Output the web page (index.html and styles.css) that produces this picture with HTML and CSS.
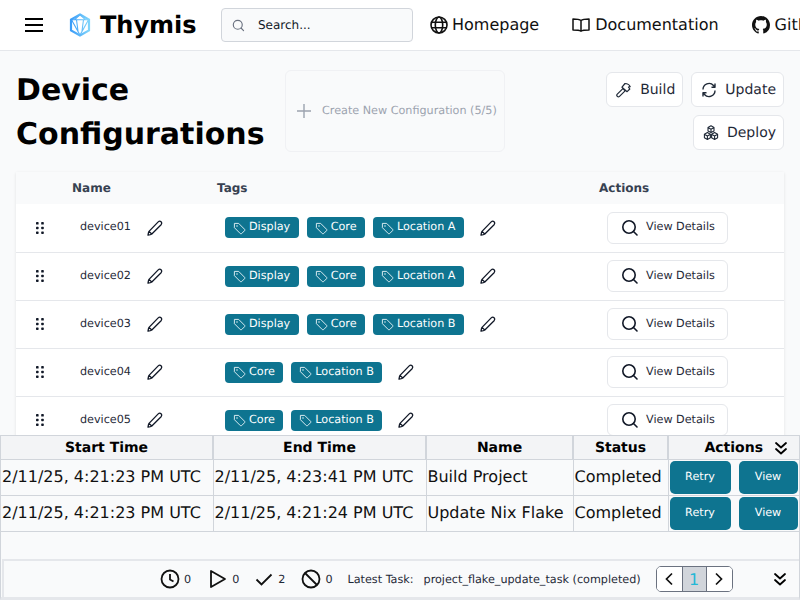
FILE: index.html
```html
<!DOCTYPE html>
<html lang="en">
<head>
<meta charset="utf-8">
<title>Device Configurations - Thymis</title>
<link rel="stylesheet" href="styles.css">
</head>
<body>
<svg class="defs" width="0" height="0" aria-hidden="true">
  <symbol id="i-pen" viewBox="0 0 18 18"><path d="M2 16.200c.2-1.400.4-2.800 1-3.800L12.200 2.900c.9-.9 2.100-.9 2.900-.1.8.8.8 2 0 2.900L5.800 15c-1 .7-2.400 1-3.800 1.200zM3 12.400l2.800 2.600" fill="none" stroke="currentColor" stroke-width="1.300" stroke-linecap="round" stroke-linejoin="round"/></symbol>
  <symbol id="i-tag" viewBox="0 0 14 14"><path d="M1.500 1.500h4.600l6.400 6.400c.4.400.4 1 0 1.400l-3.200 3.200c-.4.400-1 .4-1.400 0L1.500 6.100z" fill="none" stroke="currentColor" stroke-width="1" stroke-linejoin="round"/><circle cx="4.300" cy="4.300" r=".8" fill="currentColor"/></symbol>
  <symbol id="i-search" viewBox="0 0 18 18"><circle cx="8" cy="8" r="6.200" fill="none" stroke="currentColor" stroke-width="1.600"/><path d="M12.500 12.500l3.500 3.500" fill="none" stroke="currentColor" stroke-width="1.600" stroke-linecap="round"/></symbol>
  <symbol id="i-drag" viewBox="0 0 8 12"><g fill="currentColor"><rect x="0" y="0" width="2.600" height="2.600" rx=".7"/><rect x="5.200" y="0" width="2.600" height="2.600" rx=".7"/><rect x="0" y="4.700" width="2.600" height="2.600" rx=".7"/><rect x="5.200" y="4.700" width="2.600" height="2.600" rx=".7"/><rect x="0" y="9.400" width="2.600" height="2.600" rx=".7"/><rect x="5.200" y="9.400" width="2.600" height="2.600" rx=".7"/></g></symbol>
  <symbol id="i-dbl" viewBox="0 0 14 14"><path d="M2 2l5 4.500L12 2M2 8l5 4.500L12 8" fill="none" stroke="currentColor" stroke-width="1.800" stroke-linecap="round" stroke-linejoin="round"/></symbol>
</svg>
<div class="app">
  <nav class="nav">
    <svg class="burger" viewBox="0 0 18 14" aria-hidden="true"><path d="M0 1h18M0 7h18M0 13h18" stroke="currentColor" stroke-width="2"/></svg>
    <svg class="logo" viewBox="0 0 22 24" aria-hidden="true">
      <defs><linearGradient id="lg" x1="0" y1="0" x2="1" y2="0"><stop offset="0" stop-color="#3b9cf8"/><stop offset="1" stop-color="#7fd4fb"/></linearGradient></defs>
      <path d="M11 1.500L20 6.600V17.400L11 22.500L2 17.400V6.600z" fill="none" stroke="url(#lg)" stroke-width="2.200"/>
      <path d="M2.500 6.800H19.500L11 22L2.500 6.800M7.500 6.800L9 18M14.500 6.800L13 18M11 1.500L5.500 6.800M11 1.500L16.500 6.800" fill="none" stroke="url(#lg)" stroke-width="1.100"/>
    </svg>
    <span class="brand">Thymis</span>
    <label class="search">
      <svg class="search-icon"><use href="#i-search"/></svg>
      <span>Search...</span>
    </label>
    <a class="link link-home">
      <svg class="link-icon" viewBox="0 0 18 18" aria-hidden="true"><g fill="none" stroke="currentColor" stroke-width="1.600"><circle cx="9" cy="9" r="8"/><ellipse cx="9" cy="9" rx="3.700" ry="8"/><path d="M1.500 6.300h15M1.500 11.700h15"/></g></svg>
      <span class="link-text">Homepage</span>
    </a>
    <a class="link link-docs">
      <svg class="link-icon" viewBox="0 0 18 18" aria-hidden="true"><path d="M9 4.500C7.500 3.300 5.500 3 1 3v11c4 0 6.500.2 8 1.200 1.500-1 4-1.200 8-1.200V3c-4.500 0-6.500.3-8 1.500zM9 4.500v10.700" fill="none" stroke="currentColor" stroke-width="1.500" stroke-linejoin="round"/></svg>
      <span class="link-text">Documentation</span>
    </a>
    <a class="link link-git">
      <svg class="link-icon" viewBox="0 0 16 16" aria-hidden="true"><path fill="currentColor" d="M8 0C3.580 0 0 3.580 0 8c0 3.540 2.290 6.530 5.470 7.590.4.070.55-.17.55-.38 0-.19-.01-.82-.01-1.490-2.010.37-2.530-.49-2.690-.94-.09-.23-.48-.94-.82-1.130-.28-.15-.68-.52-.01-.53.63-.01 1.080.58 1.230.82.720 1.210 1.870.87 2.330.66.070-.52.280-.87.510-1.070-1.780-.2-3.640-.89-3.640-3.950 0-.87.310-1.590.82-2.150-.08-.2-.36-1.020.08-2.120 0 0 .67-.21 2.200.82.640-.18 1.320-.27 2-.27s1.360.09 2 .27c1.530-1.040 2.200-.82 2.200-.82.440 1.100.16 1.920.08 2.120.51.560.82 1.270.82 2.150 0 3.070-1.870 3.750-3.650 3.950.29.250.54.730.54 1.480 0 1.070-.01 1.930-.01 2.200 0 .21.150.46.550.38A8.010 8.010 0 0 0 16 8c0-4.420-3.580-8-8-8z"/></svg>
      <span class="link-text">GitHub</span>
    </a>
  </nav>

  <main class="main">
    <header class="head">
      <h1 class="title">Device Configurations</h1>
      <div class="create">
        <svg class="plus" viewBox="0 0 14 14" aria-hidden="true"><path d="M7 0v14M0 7h14" stroke="currentColor" stroke-width="1.400"/></svg>
        <span class="create-text">Create New Configuration (5/5)</span>
      </div>
      <div class="actions">
        <button class="btn">
          <svg class="btn-icon" viewBox="0 0 16 16" aria-hidden="true"><path d="M1.300 12.200L6.900 6.600 9.100 8.800 3.500 14.400a1.550 1.550 0 0 1-2.200-2.200zM6 5.200L9 1.500c2.300 0 4.300 1.100 5.200 3.200l-1.700.4 1.300 1.900-2.700 2.700z" fill="none" stroke="currentColor" stroke-width="1.200" stroke-linejoin="round"/></svg>
          <span class="btn-text">Build</span>
        </button>
        <button class="btn">
          <svg class="btn-icon" viewBox="0 0 16 16" aria-hidden="true"><path d="M2 7.500A6 6 0 0 1 12.500 3.500L14 5M14 8.500A6 6 0 0 1 3.500 12.500L2 11M14 1.500V5.200H10.500M2 14.500V10.800H5.500" fill="none" stroke="currentColor" stroke-width="1.400" stroke-linejoin="round"/></svg>
          <span class="btn-text">Update</span>
        </button>
        <button class="btn">
          <svg class="btn-icon" viewBox="0 0 16 16" aria-hidden="true"><g fill="none" stroke="currentColor" stroke-width="1.100" stroke-linejoin="round"><path d="M8 .8l3 1.700v3.400L8 7.600 5 5.900V2.500zM5 2.500l3 1.700 3-1.700M8 4.200v3.400"/><path d="M4.400 7.600l3 1.700v3.400l-3 1.700-3-1.700V9.300zM1.400 9.300l3 1.700 3-1.700M4.400 11v3.400"/><path d="M11.600 7.600l3 1.700v3.400l-3 1.700-3-1.700V9.300zM8.600 9.300l3 1.700 3-1.700M11.600 11v3.400"/></g></svg>
          <span class="btn-text">Deploy</span>
        </button>
      </div>
    </header>

    <table class="devices">
      <colgroup><col class="c-drag"><col class="c-name"><col class="c-tags"><col class="c-act"></colgroup>
      <thead><tr><th></th><th>Name</th><th>Tags</th><th>Actions</th></tr></thead>
      <tbody>
        <tr>
          <td><svg class="drag"><use href="#i-drag"/></svg></td>
          <td><div class="cell"><span class="dev">device01</span><svg class="pen"><use href="#i-pen"/></svg></div></td>
          <td><div class="cell tags"><span class="tag"><svg class="tag-i"><use href="#i-tag"/></svg>Display</span><span class="tag"><svg class="tag-i"><use href="#i-tag"/></svg>Core</span><span class="tag"><svg class="tag-i"><use href="#i-tag"/></svg>Location A</span><svg class="pen pen-t"><use href="#i-pen"/></svg></div></td>
          <td><button class="view"><svg class="view-i"><use href="#i-search"/></svg><span>View Details</span></button></td>
        </tr>
        <tr>
          <td><svg class="drag"><use href="#i-drag"/></svg></td>
          <td><div class="cell"><span class="dev">device02</span><svg class="pen"><use href="#i-pen"/></svg></div></td>
          <td><div class="cell tags"><span class="tag"><svg class="tag-i"><use href="#i-tag"/></svg>Display</span><span class="tag"><svg class="tag-i"><use href="#i-tag"/></svg>Core</span><span class="tag"><svg class="tag-i"><use href="#i-tag"/></svg>Location A</span><svg class="pen pen-t"><use href="#i-pen"/></svg></div></td>
          <td><button class="view"><svg class="view-i"><use href="#i-search"/></svg><span>View Details</span></button></td>
        </tr>
        <tr>
          <td><svg class="drag"><use href="#i-drag"/></svg></td>
          <td><div class="cell"><span class="dev">device03</span><svg class="pen"><use href="#i-pen"/></svg></div></td>
          <td><div class="cell tags"><span class="tag"><svg class="tag-i"><use href="#i-tag"/></svg>Display</span><span class="tag"><svg class="tag-i"><use href="#i-tag"/></svg>Core</span><span class="tag"><svg class="tag-i"><use href="#i-tag"/></svg>Location B</span><svg class="pen pen-t"><use href="#i-pen"/></svg></div></td>
          <td><button class="view"><svg class="view-i"><use href="#i-search"/></svg><span>View Details</span></button></td>
        </tr>
        <tr>
          <td><svg class="drag"><use href="#i-drag"/></svg></td>
          <td><div class="cell"><span class="dev">device04</span><svg class="pen"><use href="#i-pen"/></svg></div></td>
          <td><div class="cell tags"><span class="tag"><svg class="tag-i"><use href="#i-tag"/></svg>Core</span><span class="tag"><svg class="tag-i"><use href="#i-tag"/></svg>Location B</span><svg class="pen pen-t"><use href="#i-pen"/></svg></div></td>
          <td><button class="view"><svg class="view-i"><use href="#i-search"/></svg><span>View Details</span></button></td>
        </tr>
        <tr>
          <td><svg class="drag"><use href="#i-drag"/></svg></td>
          <td><div class="cell"><span class="dev">device05</span><svg class="pen"><use href="#i-pen"/></svg></div></td>
          <td><div class="cell tags"><span class="tag"><svg class="tag-i"><use href="#i-tag"/></svg>Core</span><span class="tag"><svg class="tag-i"><use href="#i-tag"/></svg>Location B</span><svg class="pen pen-t"><use href="#i-pen"/></svg></div></td>
          <td><button class="view"><svg class="view-i"><use href="#i-search"/></svg><span>View Details</span></button></td>
        </tr>
      </tbody>
    </table>
  </main>

  <section class="panel">
    <div class="tasks">
      <table class="task-table">
        <colgroup><col class="t1"><col class="t2"><col class="t3"><col class="t4"><col class="t5"></colgroup>
        <thead>
          <tr><th>Start Time</th><th>End Time</th><th>Name</th><th>Status</th><th><div class="act-head"><span>Actions</span><svg class="dbl"><use href="#i-dbl"/></svg></div></th></tr>
        </thead>
        <tbody>
          <tr><td>2/11/25, 4:21:23 PM UTC</td><td>2/11/25, 4:23:41 PM UTC</td><td>Build Project</td><td>Completed</td><td><div class="task-btns"><button class="teal">Retry</button><button class="teal">View</button></div></td></tr>
          <tr><td>2/11/25, 4:21:23 PM UTC</td><td>2/11/25, 4:21:24 PM UTC</td><td>Update Nix Flake</td><td>Completed</td><td><div class="task-btns"><button class="teal">Retry</button><button class="teal">View</button></div></td></tr>
        </tbody>
      </table>
    </div>
    <footer class="status">
      <div class="stats">
        <svg class="st-i" viewBox="0 0 20 20" aria-hidden="true"><circle cx="10" cy="10" r="8.500" fill="none" stroke="currentColor" stroke-width="1.800"/><path d="M10 5v5.500l3.500 2" fill="none" stroke="currentColor" stroke-width="1.800"/></svg><span class="num">0</span>
        <svg class="st-i st-play" viewBox="0 0 20 20" aria-hidden="true"><path d="M3 2v16L17 10z" fill="none" stroke="currentColor" stroke-width="1.800" stroke-linejoin="round"/></svg><span class="num">0</span>
        <svg class="st-i st-check" viewBox="0 0 20 20" aria-hidden="true"><path d="M2.500 10.500L7.500 15.500L17.500 5.500" fill="none" stroke="currentColor" stroke-width="1.800"/></svg><span class="num">2</span>
        <svg class="st-i st-ban" viewBox="0 0 20 20" aria-hidden="true"><circle cx="10" cy="10" r="8.500" fill="none" stroke="currentColor" stroke-width="1.800"/><path d="M4 4l12 12" stroke="currentColor" stroke-width="1.800"/></svg><span class="num">0</span>
      </div>
      <span class="latest">Latest Task:</span>
      <span class="latest-val">project_flake_update_task (completed)</span>
      <div class="pager">
        <button class="pg"><svg class="pg-i" viewBox="0 0 10 14" aria-hidden="true"><path d="M8 1.500L2.500 7L8 12.500" fill="none" stroke="currentColor" stroke-width="1.700"/></svg></button>
        <span class="pg pg-cur">1</span>
        <button class="pg"><svg class="pg-i" viewBox="0 0 10 14" aria-hidden="true"><path d="M2 1.500L7.500 7L2 12.500" fill="none" stroke="currentColor" stroke-width="1.700"/></svg></button>
      </div>
      <svg class="dbl dbl-foot"><use href="#i-dbl"/></svg>
    </footer>
  </section>
</div>
</body>
</html>
```
FILE: styles.css
```css
* { box-sizing: border-box; }
html, body { margin: 0; padding: 0; }
body { font-family: "DejaVu Sans", sans-serif; color: #111827; background: #f9fafb; text-rendering: geometricPrecision; }
.defs { position: absolute; }
button { font-family: inherit; cursor: pointer; text-rendering: inherit; }
.app { width: 800px; height: 600px; display: flex; flex-direction: column; overflow: hidden; }

/* nav */
.nav { flex: none; height: 51px; display: flex; align-items: center; background: #fff; border-bottom: 1px solid #e5e7eb; padding-left: 25px; overflow: hidden; white-space: nowrap; color: #000; }
.burger { flex: none; width: 18px; height: 14px; margin-right: 26px; }
.logo { flex: none; width: 22px; height: 24px; }
.brand { flex: none; font-size: 24px; font-weight: 700; margin-left: 9px; width: 121px; }
.search { flex: none; width: 192px; height: 34px; display: flex; align-items: center; background: #f9fafb; border: 1px solid #d1d5db; border-radius: 4px; padding-left: 10px; font-size: 12px; color: #111827; }
.search-icon { width: 13px; height: 13px; color: #6b7280; margin-right: 13px; }
.link { flex: none; display: flex; align-items: center; font-size: 16px; color: #111; }
.link-text { padding-bottom: 1px; }
.link-icon { flex: none; width: 18px; height: 18px; }
.link-home { margin-left: 17px; gap: 4px; }
.link-docs { margin-left: 33px; gap: 5px; }
.link-git { margin-left: 33px; gap: 5px; }

/* main */
.main { flex: 1; min-height: 0; overflow: hidden; padding: 16px; }
.head { display: flex; align-items: flex-start; height: 105px; }
.title { flex: none; width: 269px; margin: 2px 0 0; font-size: 30px; line-height: 44px; font-weight: 700; color: #000; }
.create { flex: none; width: 220px; height: 82px; margin-top: 3px; display: flex; align-items: center; gap: 11px; padding-left: 11px; background: #f9fafb; border: 1px solid #f0f1f4; border-radius: 6px; font-size: 11.200px; color: #9ca3af; white-space: nowrap; }
.create-text { padding-bottom: 2px; }
.plus { width: 14px; height: 14px; color: #9ca3af; flex: none; }
.actions { flex: 1; margin-left: 16px; display: flex; flex-wrap: wrap; justify-content: flex-end; gap: 8px; padding-top: 5px; }
.btn { height: 35px; display: flex; align-items: center; gap: 8px; padding: 0 7px 0 9px; background: #fff; border: 1px solid #e5e7eb; border-radius: 6px; font-size: 14px; color: #1f2937; }
.btn-icon { width: 16px; height: 16px; flex: none; }

/* devices table */
.devices { width: 768px; table-layout: fixed; border-collapse: collapse; margin-top: 0; box-shadow: 0 1px 3px rgba(0,0,0,.1); }
.c-drag { width: 48px; }
.c-name { width: 145px; }
.c-tags { width: 382px; }
.c-act { width: 193px; }
.devices thead tr { height: 32px; background: #f9fafb; }
.devices th { text-align: left; font-size: 12px; font-weight: 700; color: #374151; padding: 0 0 0 8px; }
.devices tbody tr { height: 48px; background: #fff; border-bottom: 1px solid #e5e7eb; }
.devices td { padding: 0 0 0 16px; vertical-align: middle; }
.drag { display: block; width: 8px; height: 12px; color: #111827; margin-left: 4px; }
.cell { display: flex; align-items: center; }
.dev { width: 67px; font-size: 11.200px; color: #1f2937; padding-bottom: 2px; }
.pen { width: 18px; height: 18px; color: #111827; flex: none; margin-left: -1px; }
.tags { gap: 8px; }
.tag { height: 21px; display: flex; align-items: center; padding: 0 8.400px 2px 8px; gap: 3px; background: #0e7490; border-radius: 4px; font-size: 11.200px; color: #fff; line-height: 17px; }
.tag-i { width: 13px; height: 13px; color: #e5f2f6; margin-top: 3px; }
.pen-t { margin-left: 7px; }
.view { width: 121px; height: 32px; display: flex; align-items: center; gap: 7px; padding: 0 0 0 13px; background: #fff; border: 1px solid #e5e7eb; border-radius: 6px; font-size: 11.200px; color: #1f2937; }
.view span { padding-bottom: 2px; }
.view-i { width: 18px; height: 18px; color: #111827; flex: none; }

/* tasks panel */
.panel { flex: none; height: 165px; display: flex; flex-direction: column; background: #f9fafb; border-top: 1px solid #d1d5db; border-left: 1px solid #d1d5db; border-right: 1px solid #d1d5db; border-bottom: 3px solid #e5e7eb; position: relative; }
.tasks { flex: 1; min-height: 0; }
.task-table { width: 798px; table-layout: fixed; border-collapse: collapse; font-size: 16px; color: #111; white-space: nowrap; }
.t1 { width: 212px; } .t2 { width: 213px; } .t3 { width: 147px; } .t4 { width: 95px; } .t5 { width: 131px; }
.task-table thead tr { height: 23px; background: #f3f4f6; }
.task-table th { font-size: 14px; font-weight: 700; color: #000; text-align: center; padding: 2px 0 0; border-right: 2px solid #d1d5db; border-bottom: 1px solid #d1d5db; }
.task-table th:last-child { border-right: 0; }
.task-table tbody tr { height: 36px; }
.task-table td { padding: 0 0 1px 1px; border-right: 1px solid #d1d5db; border-bottom: 1px solid #d1d5db; overflow: hidden; }
.task-table td:last-child { border-right: 0; padding: 0 0 0 1px; }
.act-head { display: flex; align-items: center; justify-content: flex-end; gap: 11px; padding-right: 11px; }
.dbl { width: 14px; height: 14px; color: #000; flex: none; }
.task-btns { display: flex; gap: 8px; }
.teal { width: 61px; height: 33px; padding: 0 0 2px; background: #0e7490; border: 0; border-radius: 5px; color: #fff; font-size: 11.200px; }
.teal + .teal { width: 59px; }

/* status bar */
.status { flex: none; height: 38px; display: flex; align-items: center; margin-left: 1px; background: #f9fafb; border: 2px solid #e5e7eb; border-bottom: 0; border-right: 0; padding-left: 156px; font-size: 11.200px; color: #1f2937; white-space: nowrap; }
.stats { display: flex; align-items: center; }
.st-i { width: 20px; height: 20px; color: #111; flex: none; }
.num { margin-left: 4px; color: #1f2937; }
.st-play { margin-left: 17px; }
.st-check { margin-left: 15px; }
.st-ban { margin-left: 16px; }
.latest { margin-left: 15px; }
.latest-val { margin-left: 10px; }
.pager { display: flex; margin-left: 15px; height: 26px; border: 1px solid #6b7280; border-radius: 5px; overflow: hidden; background: #fff; }
.pg { width: 25px; display: flex; align-items: center; justify-content: center; padding: 0; border: 0; background: #fff; color: #111; }
.pg-i { width: 10px; height: 14px; }
.pg-cur { background: #d1d5db; color: #22b8d6; font-size: 16px; border-left: 1px solid #6b7280; border-right: 1px solid #6b7280; }
.dbl-foot { margin-left: 40px; }
```
